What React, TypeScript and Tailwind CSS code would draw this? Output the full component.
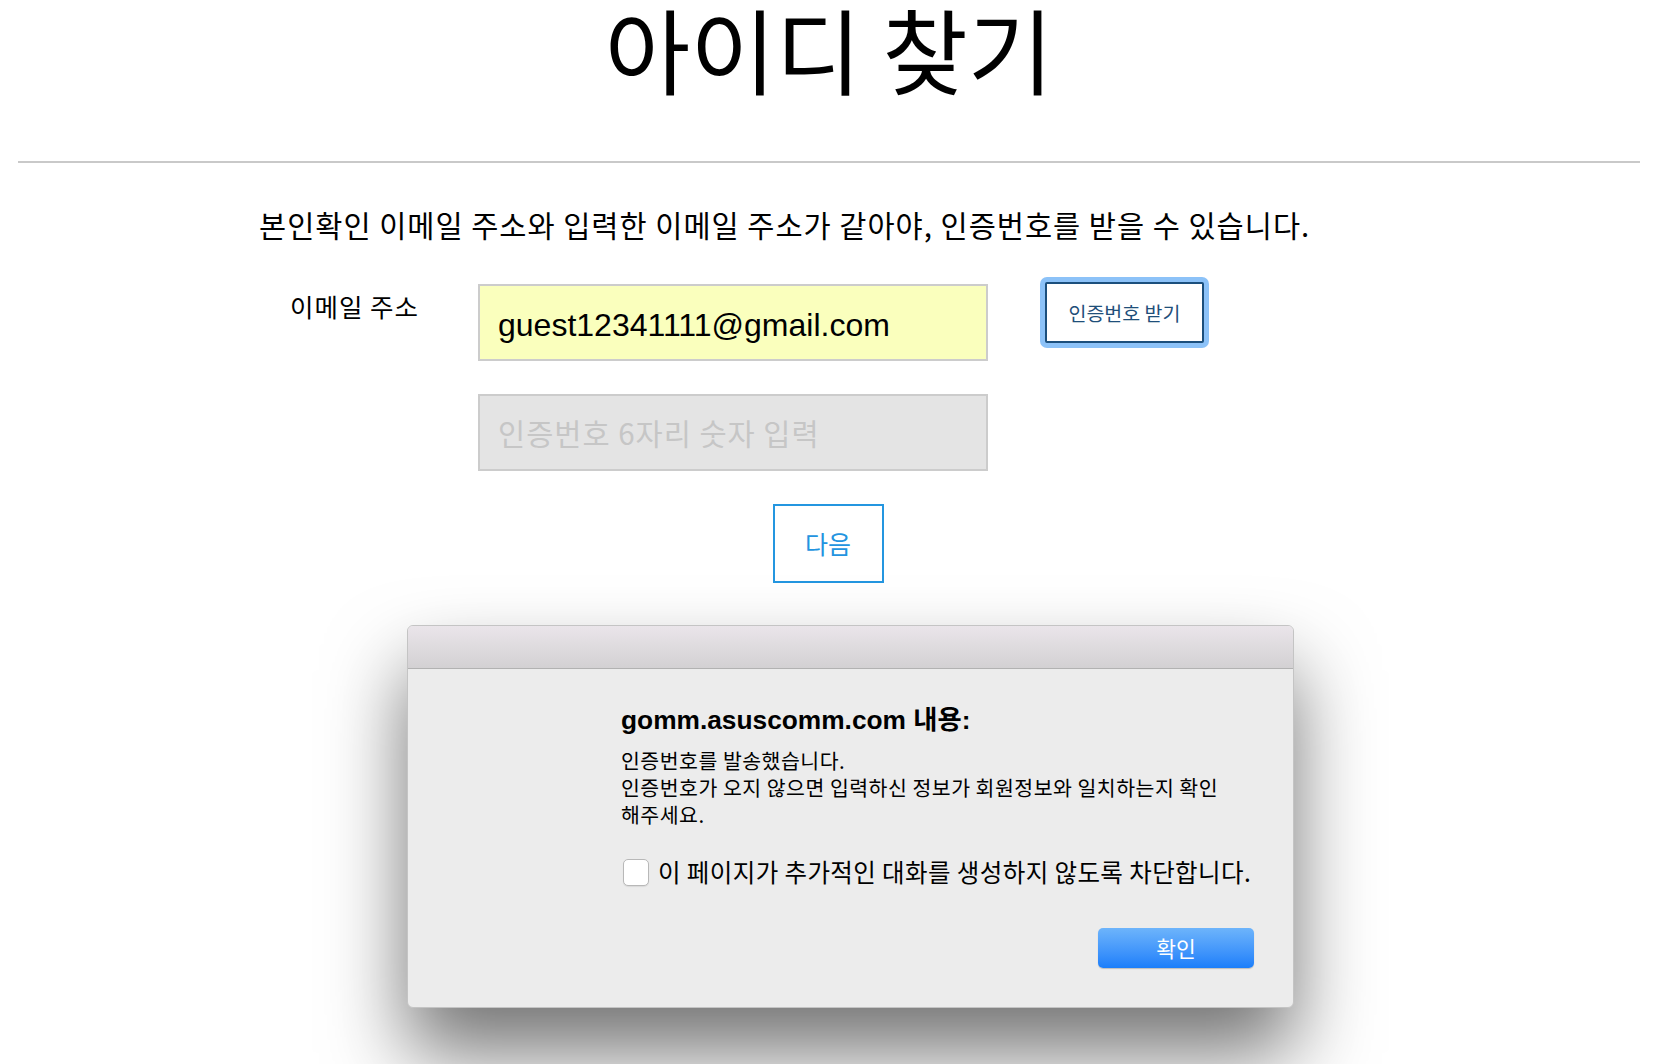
import React from "react";

const KR = "font-['Noto_Sans_CJK_KR',sans-serif]";
const MIX = "font-['Liberation_Sans','Noto_Sans_CJK_KR',sans-serif]";

export default function App() {
  return (
    <div className={`relative h-[1064px] w-full overflow-hidden bg-white text-black ${KR}`}>
      <h1 className="text-center text-[93px] leading-[96px] font-normal">아이디 찾기</h1>
      <div className="mx-[18px] mt-[65px] h-[2px] bg-[#c9c9c9]" />

      <div className="mx-auto w-[1140px]">
        <p className="mt-[46px] text-[29.5px] leading-[30px] tracking-[1px]">
          본인확인 이메일 주소와 입력한 이메일 주소가 같아야, 인증번호를 받을 수 있습니다.
        </p>

        <div className="mt-[45px] flex items-start">
          <div className="ml-[31px] w-[188px] pt-[7px] text-[25.5px] leading-[30px] tracking-[1px]">이메일 주소</div>
          <div
            className={`flex h-[77px] w-[510px] items-center border-2 border-[#cccccc] bg-[#faffbd] pl-[18px] pt-[4px] text-[32px] ${MIX}`}
          >
            guest12341111@gmail.com
          </div>
          <div className="ml-[52px] -mt-[7px] rounded-[7px] bg-[#8cc2f8] p-[5px]">
            <div className="flex h-[61px] w-[159px] items-center justify-center rounded-[2px] border-2 border-[#1b4f7d] bg-white text-[19.5px] text-[#1f4f7a]">
              인증번호 받기
            </div>
          </div>
        </div>

        <div className="mt-[33px] flex">
          <div className="ml-[219px] flex h-[77px] w-[510px] items-center border-2 border-[#cccccc] bg-[#e4e4e4] pl-[18px] text-[29.5px] tracking-[1px] text-[#c6c6c6]">
            인증번호 6자리 숫자 입력
          </div>
        </div>
      </div>

      <div className="mt-[33px] flex justify-center">
        <div className="-ml-[2px] flex h-[79px] w-[111px] items-center justify-center border-2 border-[#2496e0] text-[25px] text-[#2394e0]">
          다음
        </div>
      </div>

      <div className="absolute left-[407px] top-[625px] h-[383px] w-[887px] overflow-hidden rounded-[6px] border border-[#c4c4c4] bg-[#ececec] shadow-[0_45px_80px_rgba(0,0,0,0.55)]">
        <div className="h-[43px] border-b border-[#b2b2b2] bg-linear-to-b from-[#eae5ea] to-[#d3d1d3]" />
        <div className="pl-[213px] pr-[39px]">
          <div className={`mt-[37px] text-[26.3px] font-bold leading-[28px] ${MIX}`}>gomm.asuscomm.com 내용:</div>
          <div className="mt-[13px] text-[20.5px] leading-[27px] tracking-[0.5px]">
            인증번호를 발송했습니다.
            <br />
            인증번호가 오지 않으면 입력하신 정보가 회원정보와 일치하는지 확인
            <br />
            해주세요.
          </div>
          <div className="mt-[30px] flex h-[28px] items-center">
            <div className="ml-[2px] h-[27px] w-[26px] shrink-0 rounded-[5px] border border-[#b8b8b8] bg-white shadow-[0_1px_1px_rgba(0,0,0,0.08)]" />
            <span className="ml-[9px] whitespace-nowrap text-[24.5px] leading-[28px] tracking-[0.4px]">
              이 페이지가 추가적인 대화를 생성하지 않도록 차단합니다.
            </span>
          </div>
          <div className="mt-[42px] flex justify-end">
            <div className="flex h-[40px] w-[156px] items-center justify-center rounded-[5px] bg-linear-to-b from-[#6db4fb] to-[#1a7efa] text-[21.5px] text-white shadow-[0_1px_1px_rgba(0,0,0,0.2)]">
              확인
            </div>
          </div>
        </div>
      </div>
    </div>
  );
}
